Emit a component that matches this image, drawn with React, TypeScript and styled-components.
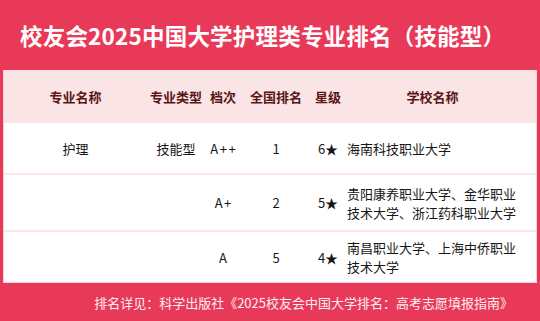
import styled, { createGlobalStyle } from 'styled-components';

interface RowTypes {
  major: string;
  type: string;
  grade: string;
  rank: string;
  star: string;
  schools: string[];
  height: number;
}

const rows: RowTypes[] = [
  { major: '护理', type: '技能型', grade: 'A++', rank: '1', star: '6★', schools: ['海南科技职业大学'], height: 52 },
  {
    major: '',
    type: '',
    grade: 'A+',
    rank: '2',
    star: '5★',
    schools: ['贵阳康养职业大学、金华职业', '技术大学、浙江药科职业大学'],
    height: 57,
  },
  { major: '', type: '', grade: 'A', rank: '5', star: '4★', schools: ['南昌职业大学、上海中侨职业', '技术大学'], height: 50 },
];

const App = () => {
  return (
    <Page>
      <GlobalStyle />
      <Title>校友会2025中国大学护理类专业排名（技能型）</Title>
      <Table>
        <HeadRow>
          <Cell>专业名称</Cell>
          <Cell>专业类型</Cell>
          <Cell>档次</Cell>
          <Cell>全国排名</Cell>
          <Cell>星级</Cell>
          <SchoolHead>学校名称</SchoolHead>
        </HeadRow>
        {rows.map((row, i) => (
          <BodyRow key={i} $h={row.height} $last={i === rows.length - 1}>
            <Cell>{row.major}</Cell>
            <Cell>{row.type}</Cell>
            <Grade>{row.grade}</Grade>
            <Cell>{row.rank}</Cell>
            <Cell>{row.star}</Cell>
            <SchoolCell>
              {row.schools.map((s) => (
                <div key={s}>{s}</div>
              ))}
            </SchoolCell>
          </BodyRow>
        ))}
      </Table>
      <Footer>排名详见：科学出版社《2025校友会中国大学排名：高考志愿填报指南》</Footer>
    </Page>
  );
};

const GlobalStyle = createGlobalStyle`
  body {
    margin: 0;
    font-family: 'Noto Sans CJK SC', 'Noto Sans', sans-serif;
  }
`;

const Page = styled.div`
  width: 540px;
  height: 321px;
  background-color: #e83a58;
  display: flex;
  flex-direction: column;
  overflow: hidden;
`;

const Title = styled.h1`
  margin: 0;
  height: 70px;
  padding-left: 20px;
  display: flex;
  align-items: center;
  color: #ffffff;
  font-size: 22.5px;
  font-weight: 700;
  letter-spacing: 0.2px;
`;

const Table = styled.div`
  margin: 0 3px;
  background-color: #ffffff;
  border: 1px solid #f7d3d8;
  border-top: none;
`;

const grid = `
  display: grid;
  grid-template-columns: 143px 58px 36px 70px 34px 1fr;
  align-items: center;
`;

const HeadRow = styled.div`
  ${grid}
  height: 53px;
  background-color: #fbe4e6;
  color: #5a1616;
  font-size: 13px;
  font-weight: 700;
`;

const BodyRow = styled.div<{ $h: number; $last: boolean }>`
  ${grid}
  height: ${(p) => p.$h}px;
  box-sizing: border-box;
  border-bottom: ${(p) => (p.$last ? 'none' : '2px solid #fbe6e9')};
  color: #161616;
  font-size: 13px;
`;

const Cell = styled.div`
  text-align: center;
  white-space: nowrap;
`;

const Grade = styled(Cell)`
  letter-spacing: 1.5px;
  padding-left: 1.5px;
`;

const SchoolHead = styled.div`
  text-align: center;
  padding: 0 18px 0 2px;
`;

const SchoolCell = styled.div`
  padding-left: 2px;
  line-height: 19px;
  white-space: nowrap;
`;

const Footer = styled.div`
  flex: 1;
  display: flex;
  align-items: center;
  justify-content: flex-end;
  padding-right: 27px;
  padding-top: 1px;
  color: #fdeef0;
  font-size: 13px;
`;

export default App;
